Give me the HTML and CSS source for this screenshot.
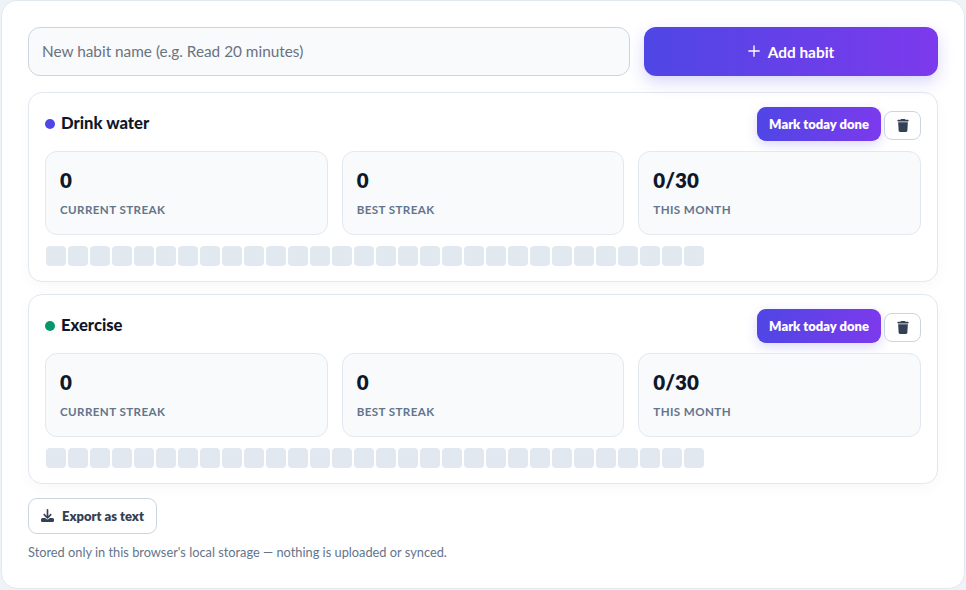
FILE: index.html
```html
<!DOCTYPE html>
<html lang="en">
<head>
  <meta charset="UTF-8">
  <title>Habit Tracker</title>
  <link rel="stylesheet" href="styles.css">
</head>
<body>
  <div class="app-card">
    <div class="add-row">
      <input type="text" class="habit-input" placeholder="New habit name (e.g. Read 20 minutes)">
      <button class="btn btn-add">
        <svg class="icon-plus" viewBox="0 0 14 14"><path d="M7 1v12M1 7h12"/></svg>
        Add habit
      </button>
    </div>

    <div class="habit">
      <div class="habit-head">
        <div class="habit-name"><span class="dot dot-indigo"></span>Drink water</div>
        <div class="habit-actions">
          <button class="btn btn-mark">Mark today done</button>
          <button class="btn-icon">
            <svg class="icon-trash" viewBox="0 0 448 512"><path d="M135.2 17.7L128 32H32C14.3 32 0 46.3 0 64S14.3 96 32 96H416c17.7 0 32-14.3 32-32s-14.3-32-32-32H320l-7.2-14.3C307.4 6.8 296.3 0 284.2 0H163.8c-12.1 0-23.2 6.8-28.6 17.7zM416 128H32L53.2 467c1.6 25.3 22.6 45 47.9 45H346.9c25.3 0 46.3-19.7 47.9-45L416 128z"/></svg>
          </button>
        </div>
      </div>
      <div class="stats">
        <div class="stat"><div class="stat-value">0</div><div class="stat-label">CURRENT STREAK</div></div>
        <div class="stat"><div class="stat-value">0</div><div class="stat-label">BEST STREAK</div></div>
        <div class="stat"><div class="stat-value">0/30</div><div class="stat-label">THIS MONTH</div></div>
      </div>
      <div class="days">
        <span></span><span></span><span></span><span></span><span></span><span></span><span></span><span></span><span></span><span></span>
        <span></span><span></span><span></span><span></span><span></span><span></span><span></span><span></span><span></span><span></span>
        <span></span><span></span><span></span><span></span><span></span><span></span><span></span><span></span><span></span><span></span>
      </div>
    </div>

    <div class="habit">
      <div class="habit-head">
        <div class="habit-name"><span class="dot dot-green"></span>Exercise</div>
        <div class="habit-actions">
          <button class="btn btn-mark">Mark today done</button>
          <button class="btn-icon">
            <svg class="icon-trash" viewBox="0 0 448 512"><path d="M135.2 17.7L128 32H32C14.3 32 0 46.3 0 64S14.3 96 32 96H416c17.7 0 32-14.3 32-32s-14.3-32-32-32H320l-7.2-14.3C307.4 6.8 296.3 0 284.2 0H163.8c-12.1 0-23.2 6.8-28.6 17.7zM416 128H32L53.2 467c1.6 25.3 22.6 45 47.9 45H346.9c25.3 0 46.3-19.7 47.9-45L416 128z"/></svg>
          </button>
        </div>
      </div>
      <div class="stats">
        <div class="stat"><div class="stat-value">0</div><div class="stat-label">CURRENT STREAK</div></div>
        <div class="stat"><div class="stat-value">0</div><div class="stat-label">BEST STREAK</div></div>
        <div class="stat"><div class="stat-value">0/30</div><div class="stat-label">THIS MONTH</div></div>
      </div>
      <div class="days">
        <span></span><span></span><span></span><span></span><span></span><span></span><span></span><span></span><span></span><span></span>
        <span></span><span></span><span></span><span></span><span></span><span></span><span></span><span></span><span></span><span></span>
        <span></span><span></span><span></span><span></span><span></span><span></span><span></span><span></span><span></span><span></span>
      </div>
    </div>

    <button class="btn-export">
      <svg class="icon-download" viewBox="0 0 512 512"><path d="M288 32c0-17.7-14.3-32-32-32s-32 14.3-32 32V274.7l-73.4-73.4c-12.5-12.5-32.8-12.5-45.3 0s-12.5 32.8 0 45.3l128 128c12.5 12.5 32.8 12.5 45.3 0l128-128c12.5-12.5 12.5-32.8 0-45.3s-32.8-12.5-45.3 0L288 274.7V32zM64 352c-35.3 0-64 28.7-64 64v32c0 35.3 28.7 64 64 64H448c35.3 0 64-28.7 64-64V416c0-35.3-28.7-64-64-64H346.5l-45.3 45.3c-25 25-65.5 25-90.5 0L165.5 352H64z"/></svg>
      Export as text
    </button>
    <p class="note">Stored only in this browser's local storage — nothing is uploaded or synced.</p>
  </div>
</body>
</html>
```

FILE: styles.css
```css
* {
  box-sizing: border-box;
}
body {
  font-family: 'Lato', sans-serif;
  background: #eef3f8;
  margin: 0;
  height: 590px;
  overflow: hidden;
  padding: 0 1px 1px 1px;
}
.app-card {
  background: white;
  border: 1px solid #e2e8f0;
  border-radius: 16px;
  height: 589px;
  padding: 26px 26px 0 26px;
}
.add-row {
  display: flex;
  gap: 14px;
  margin-bottom: 16px;
}
.habit-input {
  flex: 1;
  min-width: 0;
  height: 49px;
  padding: 0 13px 2px 13px;
  font-family: inherit;
  font-size: 15.35px;
  background: #f8fafc;
  border: 1px solid #cbd5e1;
  border-radius: 12px;
}
.habit-input::placeholder {
  color: #6b7280;
  opacity: 1;
}
.btn {
  display: flex;
  align-items: center;
  justify-content: center;
  font-family: inherit;
  font-weight: 700;
  color: white;
  border: none;
  cursor: pointer;
  background: linear-gradient(90deg, #4f46e5, #7c3aed);
}
.btn-add {
  width: 294px;
  height: 49px;
  gap: 8px;
  font-size: 15.4px;
  border-radius: 12px;
  box-shadow: 0 6px 16px rgba(79,70,229,0.22);
}
.icon-plus {
  width: 12px;
  height: 12px;
  margin-bottom: 2px;
  fill: none;
  stroke: white;
  stroke-width: 1.6;
  stroke-linecap: round;
}
.habit {
  background: white;
  border: 1px solid #e2e8f0;
  border-radius: 14px;
  padding: 14px 16px 14px 16px;
  margin-bottom: 12px;
  height: 190px;
  box-shadow: 0 4px 14px rgba(15,23,42,0.03);
}
.habit-head {
  display: flex;
  justify-content: space-between;
  align-items: center;
  margin-bottom: 10px;
}
.habit-name {
  display: flex;
  align-items: center;
  gap: 6px;
  padding-bottom: 2px;
  font-size: 16.6px;
  font-weight: 900;
  color: #0f172a;
}
.dot {
  width: 10px;
  height: 10px;
  margin-top: 2px;
  border-radius: 50%;
}
.dot-indigo {
  background: #4f46e5;
}
.dot-green {
  background: #059669;
}
.habit-actions {
  display: flex;
  align-items: center;
  gap: 3px;
}
.btn-mark {
  width: 124px;
  height: 34px;
  font-size: 13px;
  font-weight: 800;
  border-radius: 9px;
  box-shadow: 0 4px 12px rgba(79,70,229,0.2);
}
.btn-icon {
  display: flex;
  align-items: center;
  justify-content: center;
  width: 37px;
  height: 29px;
  margin-top: 2px;
  background: white;
  border: 1px solid #cbd5e1;
  border-radius: 8px;
  cursor: pointer;
}
.icon-trash {
  width: 12px;
  height: 13px;
  fill: #334155;
}
.stats {
  display: grid;
  grid-template-columns: repeat(3, 1fr);
  gap: 14px;
  margin-bottom: 11px;
}
.stat {
  height: 84px;
  padding: 14px 14px 0 14px;
  background: #f8fafc;
  border: 1px solid #e2e8f0;
  border-radius: 12px;
}
.stat-value {
  font-size: 20.5px;
  font-weight: 800;
  line-height: 28px;
  color: #0f172a;
}
.stat-label {
  margin-top: 9px;
  font-size: 11.6px;
  font-weight: 700;
  letter-spacing: 0.4px;
  color: #64748b;
}
.days {
  display: flex;
  gap: 2px;
  padding-left: 1px;
}
.days span {
  width: 20px;
  height: 20px;
  background: #e2e8f0;
  border-radius: 4px;
}
.btn-export {
  display: flex;
  align-items: center;
  gap: 8px;
  width: 129px;
  height: 36px;
  margin-top: 14px;
  padding: 0 12px;
  font-family: inherit;
  font-size: 13px;
  font-weight: 800;
  color: #334155;
  background: white;
  border: 1px solid #cbd5e1;
  border-radius: 9px;
  cursor: pointer;
}
.icon-download {
  width: 13px;
  height: 13px;
  margin-bottom: 2px;
  fill: #334155;
}
.note {
  margin: 10px 0 0 0;
  font-size: 12.8px;
  color: #64748b;
}
```
